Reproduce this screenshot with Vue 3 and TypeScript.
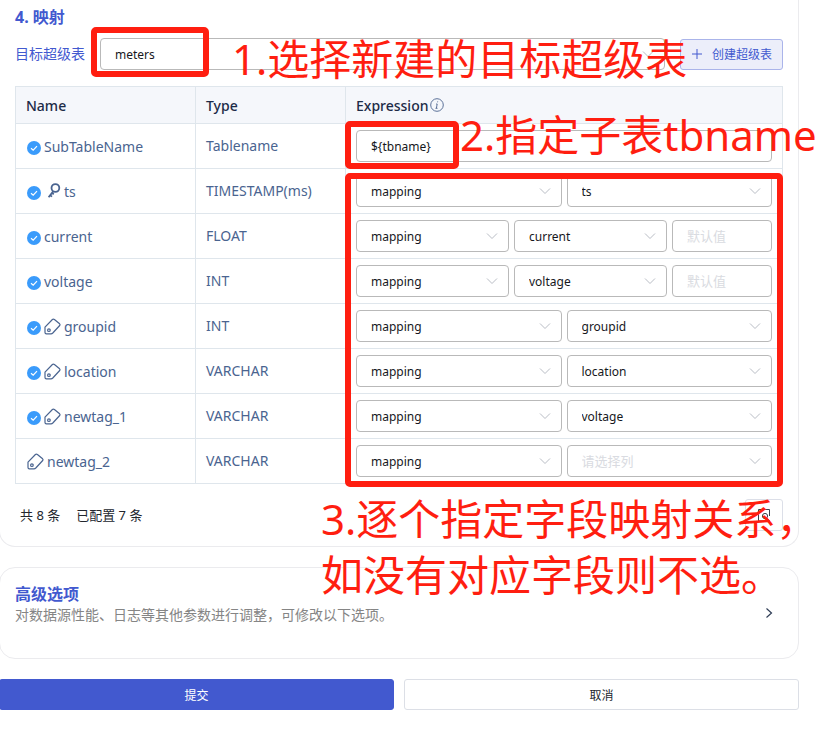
<script setup lang="ts">
import { ref } from 'vue'

type IconKind = 'key' | 'tag' | null

interface FieldRow {
  name: string
  type: string
  configured: boolean
  icon: IconKind
  mode: 'input' | 'pair' | 'triple'
  column: string
}

const target = ref('meters')
const subTable = ref('${tbname}')

const rows = ref<FieldRow[]>([
  { name: 'SubTableName', type: 'Tablename', configured: true, icon: null, mode: 'input', column: '' },
  { name: 'ts', type: 'TIMESTAMP(ms)', configured: true, icon: 'key', mode: 'pair', column: 'ts' },
  { name: 'current', type: 'FLOAT', configured: true, icon: null, mode: 'triple', column: 'current' },
  { name: 'voltage', type: 'INT', configured: true, icon: null, mode: 'triple', column: 'voltage' },
  { name: 'groupid', type: 'INT', configured: true, icon: 'tag', mode: 'pair', column: 'groupid' },
  { name: 'location', type: 'VARCHAR', configured: true, icon: 'tag', mode: 'pair', column: 'location' },
  { name: 'newtag_1', type: 'VARCHAR', configured: true, icon: 'tag', mode: 'pair', column: 'voltage' },
  { name: 'newtag_2', type: 'VARCHAR', configured: false, icon: 'tag', mode: 'pair', column: '' },
])

const columns = ['ts', 'current', 'voltage', 'groupid', 'location']
</script>

<template>
  <main class="page">
    <section class="card mapping">
      <h2 class="title">4. 映射</h2>
      <div class="target">
        <label class="target-label" for="target">目标超级表</label>
        <div class="select target-select">
          <select id="target" v-model="target">
            <option value="meters">meters</option>
          </select>
          <svg class="chevron" viewBox="0 0 12 8"><path d="M1 1.5 6 6.5 11 1.5" /></svg>
        </div>
        <button class="create" type="button">
          <svg viewBox="0 0 10 10"><path d="M5 0v10M0 5h10" /></svg>
          <span>创建超级表</span>
        </button>
      </div>

      <table class="fields">
        <thead>
          <tr>
            <th class="col-name">Name</th>
            <th class="col-type">Type</th>
            <th>
              <span class="expr">
                Expression
                <svg class="info" viewBox="0 0 14 14">
                  <circle cx="7" cy="7" r="6.3" />
                  <path d="M7.7 3.4 7.5 4.3M6.1 6h1.1L6.4 10.2M5.5 10.3h2" />
                </svg>
              </span>
            </th>
          </tr>
        </thead>
        <tbody>
          <tr v-for="row in rows" :key="row.name">
            <td>
              <div class="name">
                <svg v-if="row.configured" class="check" viewBox="0 0 14 14">
                  <circle cx="7" cy="7" r="7" />
                  <path d="M4 7.2 6.2 9.2 10 5.2" />
                </svg>
                <svg v-if="row.icon === 'key'" class="key" viewBox="0 0 14 16">
                  <circle cx="8.4" cy="5" r="3.9" />
                  <path d="M6.2 8.4 1.6 14.2M3.2 12.2 5 13.6M5 9.9 6.8 11.2" />
                </svg>
                <svg v-if="row.icon === 'tag'" class="tag" viewBox="0 0 17 17">
                  <path d="M1 9.2 8.4 1.5Q9.3.6 10.4 1.5L15.6 5.8Q16.4 6.6 15.7 7.5L8.8 15Q8 15.8 7 15.8H2.4Q1 15.8 1 14.4Z" />
                  <circle cx="4.9" cy="12.2" r="1.3" />
                </svg>
                <span>{{ row.name }}</span>
              </div>
            </td>
            <td class="type">{{ row.type }}</td>
            <td>
              <div class="controls">
                <input v-if="row.mode === 'input'" v-model="subTable" class="field" type="text" aria-label="SubTableName" />
                <template v-else>
                  <div class="select">
                    <select :aria-label="row.name + ' mode'">
                      <option>mapping</option>
                    </select>
                    <svg class="chevron" viewBox="0 0 12 8"><path d="M1 1.5 6 6.5 11 1.5" /></svg>
                  </div>
                  <div class="select">
                    <select v-model="row.column" :class="{ empty: !row.column }" :aria-label="row.name + ' column'">
                      <option value="" disabled>请选择列</option>
                      <option v-for="c in columns" :key="c" :value="c">{{ c }}</option>
                    </select>
                    <svg class="chevron" viewBox="0 0 12 8"><path d="M1 1.5 6 6.5 11 1.5" /></svg>
                  </div>
                  <input v-if="row.mode === 'triple'" class="field default" type="text" placeholder="默认值" :aria-label="row.name + ' default'" />
                </template>
              </div>
            </td>
          </tr>
        </tbody>
      </table>

      <div class="summary">
        <span>共 8 条</span>
        <span>已配置 7 条</span>
        <button class="preview" type="button" aria-label="preview">
          <svg viewBox="0 0 14 14">
            <path d="M10 13H1.5V1.5h11V8" />
            <circle cx="8" cy="8" r="2.6" />
            <path d="M10 10l3 3" />
          </svg>
        </button>
      </div>
    </section>

    <section class="card advanced">
      <div class="advanced-text">
        <h2 class="title">高级选项</h2>
        <p class="desc">对数据源性能、日志等其他参数进行调整，可修改以下选项。</p>
      </div>
      <svg class="arrow" viewBox="0 0 8 12"><path d="M1.5 1.5 6.5 6 1.5 10.5" /></svg>
    </section>

    <div class="actions">
      <button class="submit" type="button">提交</button>
      <button class="cancel" type="button">取消</button>
    </div>

    <div class="frame frame-target"></div>
    <div class="frame frame-subtable"></div>
    <div class="frame frame-fields"></div>
    <p class="note note-target">1.选择新建的目标超级表</p>
    <p class="note note-subtable">2.指定子表tbname</p>
    <p class="note note-fields">3.逐个指定字段映射关系，<br />如没有对应字段则不选。</p>
  </main>
</template>

<style>
body {
  margin: 0;
  background: #fff;
  overflow-x: hidden;
}
</style>

<style scoped>
* {
  box-sizing: border-box;
}

.page {
  position: relative;
  padding-right: 36px;
  font-family: 'Noto Sans', 'Noto Sans CJK SC', sans-serif;
  font-size: 14px;
  color: #4a6490;
}

h2,
p {
  margin: 0;
}

button,
input,
select {
  font: inherit;
  margin: 0;
}

svg {
  flex: none;
  fill: none;
  stroke: currentColor;
}

.card {
  margin-left: -1px;
  border: 1px solid #ebebee;
  border-radius: 16px;
  padding: 0 15px;
}

.mapping {
  border-top: 0;
  border-radius: 0 0 16px 16px;
  padding-top: 6px;
  padding-bottom: 15px;
}

.title {
  font-size: 16px;
  line-height: 22px;
  font-weight: 700;
  color: #4259cf;
}

.target {
  display: flex;
  align-items: center;
  margin-top: 10px;
}

.target-label {
  width: 85px;
  padding-bottom: 2px;
  color: #4259cf;
}

.select {
  position: relative;
  flex: 1;
  min-width: 0;
}

.target-select {
  margin-right: 15px;
}

.select select,
.field {
  display: block;
  width: 100%;
  height: 32px;
  padding: 0 14px;
  border: 1px solid #b9b9b9;
  border-radius: 4px;
  background: #fff;
  appearance: none;
  font-size: 12px;
  color: #16181d;
  outline: none;
}

.select select.empty,
.field::placeholder {
  color: #d9dbe1;
  font-size: 13px;
}

.chevron {
  position: absolute;
  right: 11px;
  top: 12px;
  width: 12px;
  height: 8px;
  color: #b9bdc5;
  pointer-events: none;
}

.create {
  display: flex;
  align-items: center;
  gap: 10px;
  height: 31px;
  padding: 0 10px 0 11px;
  border: 1px solid #aab4ea;
  border-radius: 3px;
  background: #eceefa;
  color: #4259cf;
  font-size: 12px;
}

.create svg {
  width: 10px;
  height: 10px;
}

.fields {
  width: 100%;
  margin-top: 16px;
  border-collapse: collapse;
  table-layout: fixed;
}

.col-name {
  width: 180px;
}

.col-type {
  width: 150px;
}

th,
td {
  height: 45px;
  padding: 0 10px;
  border: 1px solid #dfe6ec;
  text-align: left;
}

td.type {
  padding-bottom: 2px;
}

th {
  height: 37px;
  background: #f5f7fb;
  font-weight: 500;
  color: #1c2b47;
}

.expr {
  display: flex;
  align-items: center;
  gap: 2px;
}

.info {
  width: 14px;
  height: 14px;
  color: #5c7299;
}

.name {
  display: flex;
  align-items: center;
  gap: 3px;
  padding-left: 1px;
}

.check {
  width: 14px;
  height: 14px;
  margin-top: 3px;
  fill: #3a9bfb;
  stroke: none;
}

.check path {
  fill: none;
  stroke: #fff;
  stroke-width: 1.2;
}

.key {
  width: 14px;
  height: 16px;
  margin: 0 0 0 3px;
  stroke-width: 1.8;
}

.tag {
  width: 17px;
  height: 17px;
  stroke-width: 1.2;
}

.controls {
  display: flex;
  gap: 5px;
}

.field.default {
  flex: none;
  width: 100px;
}

.summary {
  display: flex;
  align-items: center;
  gap: 16px;
  margin-top: 15px;
  padding-left: 5px;
  font-size: 13px;
  color: #22262e;
}

.summary span {
  padding-bottom: 2px;
}

.preview {
  display: flex;
  align-items: center;
  justify-content: center;
  width: 38px;
  height: 32px;
  margin-left: auto;
  padding: 0;
  border: 1px solid #dcdfe8;
  border-radius: 3px;
  background: #fff;
  color: #3c414c;
}

.preview svg {
  width: 14px;
  height: 14px;
}

.advanced {
  display: flex;
  align-items: center;
  justify-content: space-between;
  height: 92px;
  margin-top: 20px;
}

.advanced-text {
  padding-bottom: 18px;
}

.desc {
  line-height: 20px;
  color: #858585;
}

.arrow {
  width: 8px;
  height: 12px;
  margin-right: 10px;
  color: #2f3d56;
  stroke-width: 1.2;
}

.actions {
  display: flex;
  gap: 10px;
  margin-top: 20px;
  margin-left: -1px;
  padding-bottom: 19px;
}

.actions button {
  flex: 1;
  height: 31px;
  border: 1px solid #dcdfe6;
  border-radius: 3px;
  background: #fff;
  color: #22262e;
  font-size: 12px;
}

.actions .submit {
  border-color: #4259cf;
  background: #4259cf;
  color: #fff;
}

.frame {
  position: absolute;
  border: 6px solid #ff1e10;
  border-radius: 5px;
  pointer-events: none;
}

.frame-target {
  left: 91px;
  top: 27px;
  width: 118px;
  height: 50px;
}

.frame-subtable {
  left: 345px;
  top: 121px;
  width: 114px;
  height: 48px;
}

.frame-fields {
  left: 345px;
  right: 52px;
  top: 173px;
  height: 314px;
}

.note {
  position: absolute;
  font-size: 42px;
  line-height: 56px;
  white-space: nowrap;
  color: #ff1e10;
  pointer-events: none;
}

.note-target {
  left: 232px;
  top: 31px;
}

.note-subtable {
  left: 460px;
  top: 107px;
}

.note-fields {
  left: 321px;
  top: 491px;
}
</style>
